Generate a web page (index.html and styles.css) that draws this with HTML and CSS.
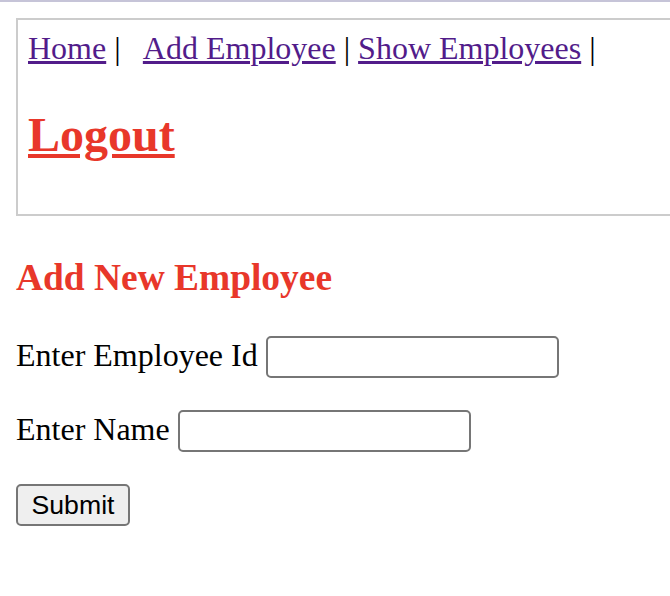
FILE: index.html
```html
<!DOCTYPE html>
<html>
<head>
<meta charset="utf-8">
<link rel="stylesheet" href="styles.css">
</head>
<body>
<div class="topline"></div>
<div class="page">
  <div class="navbox">
    <a class="navlink" href="#">Home</a> |&nbsp;&nbsp; <a class="navlink" href="#">Add Employee</a> | <a class="navlink" href="#">Show Employees</a> |
    <h2 class="logout"><a class="logout-link" href="#">Logout</a></h2>
  </div>
  <h3 class="title">Add New Employee</h3>
  <form class="form">
    <p class="row">Enter Employee Id <input class="field" type="text"></p>
    <p class="row">Enter Name <input class="field" type="text"></p>
    <p class="row"><button class="submit" type="button">Submit</button></p>
  </form>
</div>
</body>
</html>
```

FILE: styles.css
```css
html, body {
  overflow: hidden;
}
body {
  margin: 0;
  font-family: "Liberation Serif", "Times New Roman", serif;
  font-size: 32px;
  color: #000;
  background: #fff;
}
.topline {
  height: 2px;
  background: #c6c4d8;
}
.page {
  padding: 16px;
}
.navbox {
  width: 100%;
  padding: 10px;
  border: 2px solid #cccccc;
}
.navlink {
  color: #521c8a;
  text-decoration: underline;
}
.logout {
  font-size: 48px;
  font-weight: bold;
  margin: 40px 0 42px;
}
.logout-link {
  color: #e8372a;
}
.title {
  font-size: 37.44px;
  font-weight: bold;
  color: #e8372a;
  margin: 40px 0 37px;
}
.form {
  margin: 0;
}
.row {
  margin: 32px 0;
}
.row:first-child {
  margin-top: 0;
}
.field {
  box-sizing: border-box;
  width: 293px;
  height: 42px;
  border: 2px solid #767676;
  border-radius: 5px;
  padding: 2px 4px;
  font-family: "Liberation Sans", Arial, sans-serif;
  font-size: 26.67px;
  vertical-align: baseline;
  background: #fff;
}
.submit {
  box-sizing: border-box;
  width: 114px;
  height: 42px;
  border: 2px solid #767676;
  border-radius: 5px;
  background: #efefef;
  font-family: "Liberation Sans", Arial, sans-serif;
  font-size: 26.67px;
  color: #000;
  padding: 0;
}
```
